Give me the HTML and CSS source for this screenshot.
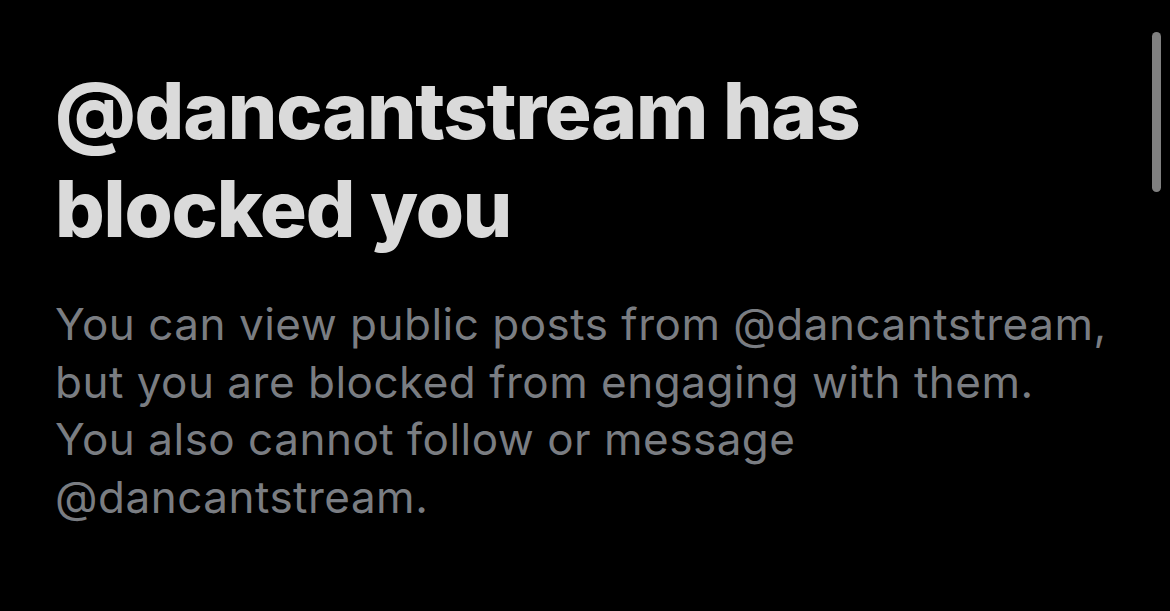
FILE: index.html
```html
<!DOCTYPE html>
<html lang="en">
<head>
<meta charset="utf-8">
<title>Blocked</title>
<link rel="stylesheet" href="styles.css">
</head>
<body>
<main class="screen">
  <section class="notice">
    <h1 class="notice-title">@dancantstream has blocked you</h1>
    <p class="notice-body">You can view public posts from @dancantstream, but you are blocked from engaging with them. You also cannot follow or message @dancantstream.</p>
  </section>
  <div class="scrollbar" aria-hidden="true"></div>
</main>
</body>
</html>
```

FILE: styles.css
```css
html, body {
  margin: 0;
  padding: 0;
  background: #000;
}
.screen {
  position: relative;
  width: 1170px;
  height: 611px;
  overflow: hidden;
  background: #000;
}
.notice {
  padding: 62px 0 0 55px;
  width: 1060px;
}
.notice-title {
  margin: 0;
  width: 920px;
  font-family: Inter, "Liberation Sans", sans-serif;
  font-weight: 800;
  font-size: 78px;
  line-height: 98px;
  color: #dadada;
  letter-spacing: -1.2px;
}
.notice-body {
  margin: 38px 0 0;
  font-family: Inter, "Noto Sans", sans-serif;
  font-weight: 400;
  font-size: 44px;
  line-height: 57.7px;
  letter-spacing: 0.5px;
  color: #7a7d82;
}
.scrollbar {
  position: absolute;
  left: 1152px;
  top: 32px;
  width: 9px;
  height: 160px;
  border-radius: 5px;
  background: #808080;
}
```
